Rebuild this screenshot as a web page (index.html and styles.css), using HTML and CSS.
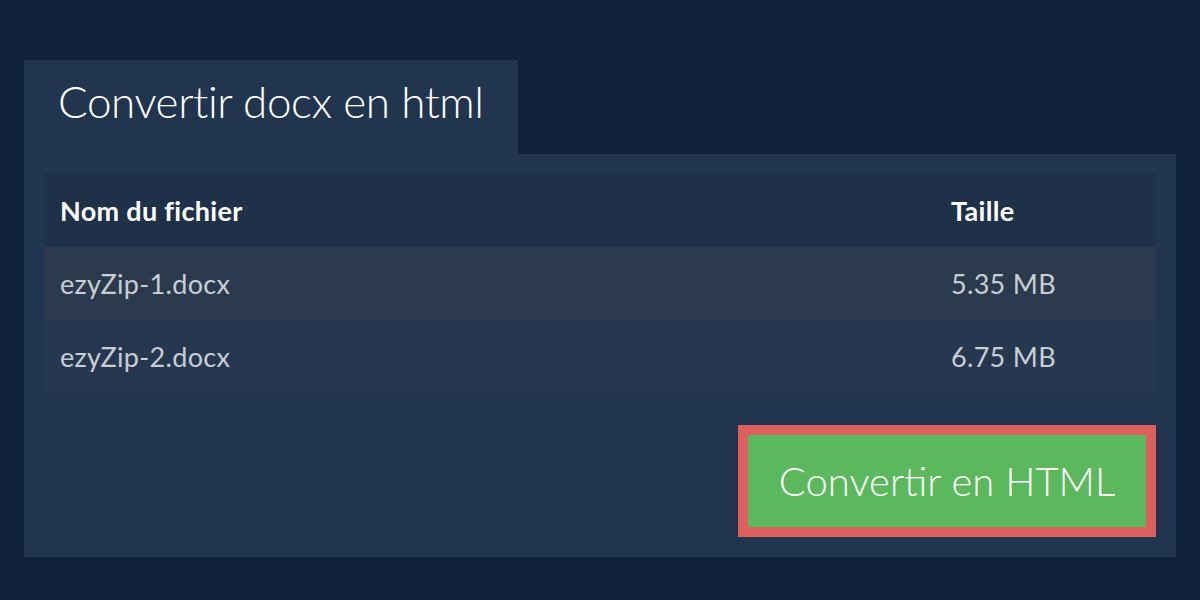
FILE: index.html
```html
<!DOCTYPE html>
<html lang="fr">
<head>
<meta charset="utf-8">
<title>Convertir docx en html</title>
<link rel="stylesheet" href="styles.css">
</head>
<body>
<div class="page">
  <div class="tab"><h1 class="title">Convertir docx en html</h1></div>
  <div class="panel">
    <table class="files">
      <thead>
        <tr><th class="col-name">Nom du fichier</th><th class="col-size">Taille</th></tr>
      </thead>
      <tbody>
        <tr class="odd"><td>ezyZip-1.docx</td><td>5.35 MB</td></tr>
        <tr class="even"><td>ezyZip-2.docx</td><td>6.75 MB</td></tr>
      </tbody>
    </table>
    <div class="actions">
      <button class="convert">Convertir en HTML</button>
    </div>
  </div>
</div>
</body>
</html>
```

FILE: styles.css
```css
html, body {
  margin: 0;
  padding: 0;
  background: #10233a;
  font-family: Lato, "Open Sans", sans-serif;
}
.page {
  padding: 60px 24px 0 24px;
  display: flex;
  flex-direction: column;
  align-items: flex-start;
}
.tab {
  width: 494px;
  height: 94px;
  background: #21364e;
  box-sizing: border-box;
  padding-left: 34px;
  display: flex;
  align-items: center;
}
.title {
  margin: 0;
  font-weight: 300;
  font-size: 44px;
  letter-spacing: -0.4px;
  color: #ffffff;
  line-height: 1;
  padding-bottom: 12px;
}
.panel {
  width: 1152px;
  box-sizing: border-box;
  background: #21364e;
  padding: 20px 20px 20px 20px;
  display: flex;
  flex-direction: column;
}
.files {
  width: 1112px;
  border-collapse: collapse;
}
.files th, .files td {
  text-align: left;
  padding: 0 0 0 16px;
  height: 73px;
  font-size: 27px;
  letter-spacing: 0.3px;
}
.files th {
  font-weight: 700;
  color: #ffffff;
  background: #1f3148;
}
.col-size { width: 205px; }
.files td {
  color: #c9ced5;
  font-weight: 400;
}
.odd td { background: #2b3b4d; }
.even td { background: #253850; }
.actions {
  display: flex;
  justify-content: flex-end;
  margin-top: 32px;
}
.convert {
  width: 418px;
  height: 112px;
  box-sizing: border-box;
  border: 10px solid #dc605d;
  background: #5cb85c;
  color: #ffffff;
  font-family: Lato, sans-serif;
  font-weight: 300;
  font-size: 40px;
  padding: 0;
  cursor: pointer;
}
```
